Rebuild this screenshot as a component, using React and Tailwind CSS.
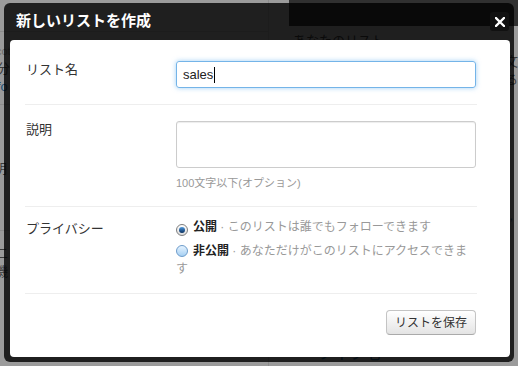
import React from "react";

function Radio({ checked }) {
  if (checked) {
    return (
      <span className="mr-[5px] inline-flex h-[12px] w-[12px] items-center justify-center rounded-full border border-[#7d7d7d] bg-gradient-to-b from-[#ffffff] to-[#dcdcdc] align-[-2px]">
        <span className="h-[6px] w-[6px] rounded-full bg-gradient-to-b from-[#4f9be0] to-[#0a2f5e]" />
      </span>
    );
  }
  return (
    <span className="mr-[5px] inline-block h-[12px] w-[12px] rounded-full border border-[#6d9ccb] bg-gradient-to-b from-[#e6f3ff] to-[#a6d0f3] align-[-2px]" />
  );
}

export default function App() {
  return (
    <div className="relative h-[366px] w-[518px] overflow-hidden bg-[#9b9b9b] font-['Liberation_Sans','Noto_Sans_CJK_JP',sans-serif]">
      {/* page behind the dialog */}
      <div className="flex h-full">
        <div className="w-[279px] border-r border-[#8c8c8c] text-[13px] leading-[18px] text-[#3a3a3a]">
          <div className="h-[32px] border-b border-[#8c8c8c]" />
          <div className="ml-[-4px] pt-[10px] text-[11px] text-[#6a6a6a]">cotton</div>
          <div className="ml-[-3px]">分</div>
          <div className="ml-[-3px] text-[#1d4f73]">fo</div>
          <div className="mt-[8px] border-t border-[#8c8c8c] pt-[55px] ml-[-6px]">明</div>
          <div className="mt-[52px] border-t border-[#8c8c8c] pt-[14px] ml-[-5px]">二</div>
          <div className="ml-[-5px]">機</div>
        </div>
        <div className="flex-1 text-[13px] leading-[18px] text-[#3a3a3a]">
          <div className="ml-[20px] h-[26px] bg-[#303030]" />
          <div className="pl-[24px] pt-[6px] text-[#333]">あなたのリスト</div>
          <div className="pl-[236px] pt-[3px]">文</div>
          <div className="pl-[236px]">る</div>
          <div className="pl-[234px] pt-[118px] text-[#1d4f73]">s,</div>
          <div className="pl-[48px] pt-[120px] text-[16px] text-[#1d4f73]">ツイフ七</div>
        </div>
      </div>

      {/* dialog */}
      <div className="absolute left-[4px] top-[3px] flex h-[359px] w-[510px] flex-col rounded-[6px] bg-black/80">
        <div className="flex h-[37px] items-center justify-between pl-[12px] pr-[5px]">
          <h3 className="text-[15px] font-bold text-white">新しいリストを作成</h3>
          <button className="flex h-[19px] w-[19px] items-center justify-center rounded-[3px] bg-[#111]">
            <svg width="10" height="10" viewBox="0 0 10 10">
              <path d="M1 1L9 9M9 1L1 9" stroke="#fff" strokeWidth="2.3" strokeLinecap="square" />
            </svg>
          </button>
        </div>

        <div className="mb-[5px] ml-[6px] mr-[4px] flex-1 rounded-[4px] bg-white">
          <div className="ml-[15px] w-[452px]">
            {/* list name */}
            <div className="flex border-b border-[#eeeeee] pb-[16px] pt-[21px]">
              <label className="w-[151px] pl-[1px] text-[13px] leading-[18px] text-[#333]">リスト名</label>
              <div className="flex h-[27px] w-[300px] items-center rounded-[3px] border border-[#74b4e8] px-[6px] text-[13px] text-[#222] shadow-[0_0_5px_rgba(82,168,236,0.55)]">
                sales
                <span className="ml-[1px] h-[16px] w-[1px] bg-black" />
              </div>
            </div>

            {/* description */}
            <div className="flex border-b border-[#eeeeee] pb-[16px] pt-[16px]">
              <label className="w-[151px] pl-[1px] text-[13px] leading-[18px] text-[#333]">説明</label>
              <div className="w-[300px]">
                <div className="h-[47px] rounded-[3px] border border-[#cccccc] shadow-[inset_0_1px_1px_rgba(0,0,0,0.075)]" />
                <p className="mt-[8px] text-[11px] leading-[14px] text-[#999]">100文字以下(オプション)</p>
              </div>
            </div>

            {/* privacy */}
            <div className="flex border-b border-[#eeeeee] pb-[15px] pt-[11px]">
              <label className="w-[151px] pl-[1px] pt-[2px] text-[13px] leading-[18px] text-[#333]">プライバシー</label>
              <div className="w-[300px] text-[12px] leading-[18px]">
                <div>
                  <Radio checked />
                  <b className="text-[#222]">公開</b>
                  <span className="text-[#999]"> · このリストは誰でもフォローできます</span>
                </div>
                <div className="mt-[6px]">
                  <Radio />
                  <b className="text-[#222]">非公開</b>
                  <span className="text-[#999]"> · あなただけがこのリストにアクセスできます</span>
                </div>
              </div>
            </div>

            {/* footer */}
            <div className="flex justify-end pr-[1px] pt-[16px]">
              <button className="h-[25px] w-[90px] rounded-[4px] border border-[#c4c4c4] border-b-[#aaa] bg-gradient-to-b from-[#ffffff] to-[#e4e4e4] text-[12px] text-[#333]">
                リストを保存
              </button>
            </div>
          </div>
        </div>
      </div>
    </div>
  );
}
